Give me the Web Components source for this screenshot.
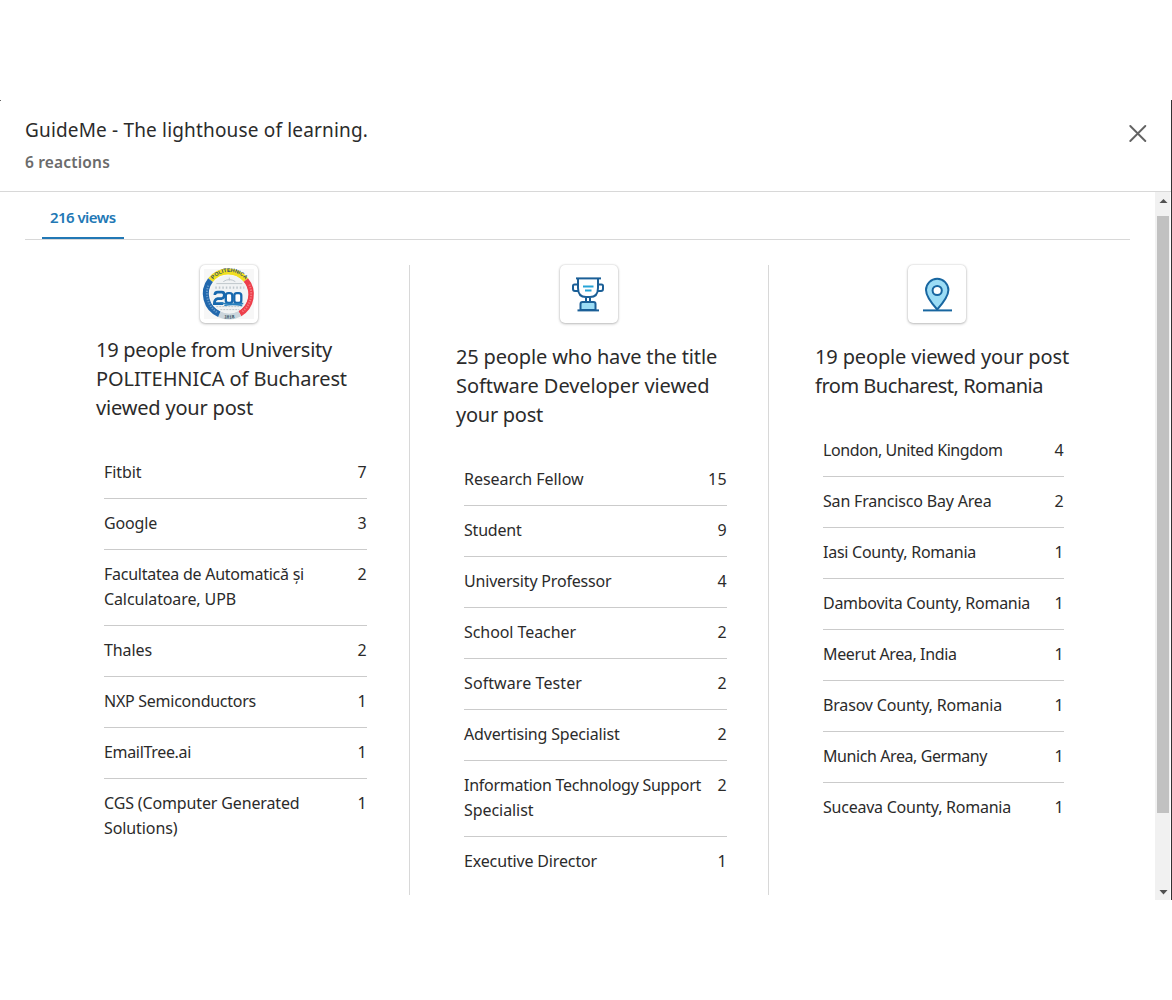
<!DOCTYPE html>
<html lang="en"><head><meta charset="utf-8"><title>Post analytics</title>
<style>body{margin:0;background:#fff;font-family:"Noto Sans","Open Sans",sans-serif;color:#2b2b2b}</style></head>
<body><analytics-dialog></analytics-dialog>
<script>
/* A single line of text, tracked so that it spans w pixels. */
class FitLine extends HTMLElement{
  connectedCallback(){
    this.attachShadow({mode:'open'}).innerHTML='<style>:host{display:block;white-space:nowrap}span{display:inline-block}</style><span></span>';
    const s=this.shadowRoot.querySelector('span');
    s.textContent=this.getAttribute('text');
    const w=+this.getAttribute('w');
    if(w){const d=(w-s.getBoundingClientRect().width)/s.textContent.length;s.style.letterSpacing=d.toFixed(3)+'px';}
  }
}
customElements.define('fit-line',FitLine);
const lines=a=>a.map(([t,w])=>`<fit-line text="${t}" w="${w}"></fit-line>`).join('');

class IconCard extends HTMLElement{
  connectedCallback(){
    const icons={
      school:`<svg width="58" height="58" viewBox="0 0 58 58"><rect x="4" y="4" width="50" height="50" fill="#f7f7f7"/>
      <g transform="translate(.3 .6)"><g fill="none" stroke-width="6"><path d="M10.2 14.5A22.3 22.3 0 0 1 45.4 14.5" stroke="#f1df20"/><path d="M45.4 14.5A22.3 22.3 0 0 1 39.5 48" stroke="#ed3f4b"/><path d="M39.5 48A22.3 22.3 0 0 1 19 48.6" stroke="#cbd5dc"/><path d="M19 48.6A22.3 22.3 0 0 1 10.2 14.5" stroke="#2268ad"/></g>
      <circle cx="29" cy="28.7" r="19" fill="#f1f3f4"/>
      <g fill="none" stroke="#bfc7cc" stroke-width="1"><path d="M16 18h26M29 12v3M23 16q6-4 12 0"/><path d="M15 22h29" stroke-width="2.4" stroke-dasharray="1.5 2"/><path d="M16 41h27M20 44h19" stroke-dasharray="2 1"/></g>
      <path d="M14.500 29.500q0-3 3-3h4q2.500 0 2.500 3t-2.500 3.500h-4q-3.500 1-3.500 5h9" fill="none" stroke="#1768ae" stroke-width="2.600"/>
      <rect x="25.500" y="27.500" width="6.500" height="9.800" rx="2.500" fill="#fff" stroke="#1768ae" stroke-width="2.300"/><rect x="34" y="27.500" width="7" height="9.800" rx="2.500" fill="#fff" stroke="#1768ae" stroke-width="2.300"/>
      <path d="M20 37q6 2 23 1M24 40q8-2 18 0" stroke="#2980bd" stroke-width="1.500" fill="none"/>
      <path id="top" d="M9.500 19.500A21 21 0 0 1 48.500 19.500" fill="none"/><path id="low" d="M18 50.500A24.500 24.500 0 0 0 40 50.500" fill="none"/>
      <g font-family="Liberation Sans" font-weight="700" fill="#315366" text-anchor="middle"><text font-size="5.400"><textPath href="#top" startOffset="50%">POLITEHNICA</textPath></text><text font-size="4.800"><textPath href="#low" startOffset="50%">1818</textPath></text></g>
      <g fill="none" stroke-width="2" stroke-dasharray="1.300 1.300" opacity=".55"><path d="M8 20A23 23 0 0 0 17 47" stroke="#9fc4e4"/><path d="M49 19A22.500 22.500 0 0 1 42 46" stroke="#ffa5a9"/></g></g></svg>`,
      trophy:`<svg width="58" height="58" viewBox="0 0 58 58" fill="none" stroke="#1b5f97" stroke-width="2"><g transform="translate(-1 .4)"><path d="M17 13h25" /><path d="M19 13v9.500q0 9 8 9h4q8 0 8-9V13M19 19h-3.500q-1.500 0-1.500 1.500v3q0 2 2 2h3M39 19h3.500q1.500 0 1.500 1.500v3q0 2-2 2h-3M27 32v4M31 32v4"/><path d="M21.500 44.500v-6q0-2 2-2h11q2 0 2 2v6z" fill="#9bdcf5"/><path d="M18.500 45h21.500"/><path d="M24 21h10.500M26 25h6.500" stroke="#26a4d7" stroke-width="2"/></g></svg>`,
      pin:`<svg width="58" height="58" viewBox="0 0 58 58" stroke="#1866a0" stroke-width="2"><path d="M29.200 44.500Q18 32 18 25a11.200 11.200 0 0 1 22.400 0Q40.400 32 29.200 44.500z" fill="#9bdcf5"/><circle cx="29.200" cy="25.500" r="4.600" fill="#fff"/><path d="M15 45.400h29"/></svg>`};
    this.attachShadow({mode:'open'}).innerHTML=`<style>:host{display:block;width:58px;height:58px;border-radius:5px;background:#fff;box-shadow:0 0 2px rgba(0,0,0,.18),0 1px 3px rgba(0,0,0,.24)}svg{display:block}</style>${icons[this.getAttribute('name')]}`;
  }
}
customElements.define('icon-card',IconCard);

class ViewRow extends HTMLElement{
  connectedCallback(){
    const r=this.data;
    this.attachShadow({mode:'open'}).innerHTML=`<style>:host{display:flex;justify-content:space-between;font-size:16px;line-height:25px;padding:12px 0 13px;border-bottom:1px solid #cbcbcb}:host(:last-child){border-bottom:0}</style><div>${lines(r[0])}</div><fit-line text="${r[1]}" w="${r[1].length>1?19:9.5}"></fit-line>`;
  }
}
customElements.define('view-row',ViewRow);

class ViewColumn extends HTMLElement{
  connectedCallback(){
    const c=this.data;
    this.attachShadow({mode:'open'}).innerHTML=`<style>:host{display:block;box-sizing:border-box;width:${c.width}px;padding-left:${c.pad}px;border-right:${c.last?0:1}px solid #d8d8d8}
    icon-card{margin-left:${c.icon}px}h2{margin:${c.gap}px 0 26px;font-size:20px;line-height:29px;font-weight:400}.rows{margin-left:8px;width:${c.rowWidth}px}</style><icon-card name="${c.name}"></icon-card><h2>${lines(c.title)}</h2><div class="rows"></div>`;
    const box=this.shadowRoot.querySelector('.rows');
    c.rows.forEach(r=>{const e=document.createElement('view-row');e.data=r;box.append(e)});
  }
}
customElements.define('view-column',ViewColumn);

class ScrollTrack extends HTMLElement{
  connectedCallback(){this.attachShadow({mode:'open'}).innerHTML=`<style>:host{display:flex;flex-direction:column;align-items:center;width:15px;background:#f1f1f1}svg{display:block;flex:none}i{display:block;width:12px;height:597px;background:#c1c1c1}</style><svg width="15" height="24"><path d="M4.500 11L8.500 7l4 4z" fill="#505050"/></svg><i></i><svg width="15" height="87"><path d="M4.500 77h8l-4 4.500z" fill="#505050"/></svg>`}
}
customElements.define('scroll-track',ScrollTrack);

class AnalyticsDialog extends HTMLElement{
  connectedCallback(){
    this.attachShadow({mode:'open'}).innerHTML=`<style>
    :host{display:block;box-sizing:border-box;width:1172px;height:1000px;padding-top:100px;overflow:hidden}
    .dialog{box-sizing:border-box;height:800px;border-right:1.500px solid #333;background:linear-gradient(#666,#666) 0 0/1px 1px no-repeat}
    header{box-sizing:border-box;height:92px;border-bottom:1px solid #d8d8d8;padding:15px 24px 0 25px;display:flex;justify-content:space-between}
    h1{margin:0;font-size:19px;line-height:30px;font-weight:400}
    .sub{font-size:15.500px;line-height:24px;font-weight:600;color:#6b6b6b;margin-top:5px}
    header svg{margin-top:9px}
    .body{display:flex;height:708px}
    main{width:1155px;padding-left:25px;box-sizing:border-box}
    nav{display:flex;box-sizing:border-box;width:1105px;height:48px;border-bottom:1px solid #d8d8d8;padding-left:17px}
    .tab{box-sizing:border-box;width:82px;height:47px;padding:13px 0 0 8px;border-bottom:2px solid #2278b5;color:#2278b5;font-size:15px;font-weight:600;line-height:24px}
    .cols{display:flex;height:630px;margin-top:25px;overflow:visible}
    </style>
    <div class="dialog"><header><div><h1>${lines([['GuideMe - The lighthouse of learning.',343]])}</h1><div class="sub">${lines([['6 reactions',85]])}</div></div>
    <svg width="18" height="18" viewBox="0 0 18 18"><path d="M1.300 2l15 15M16.300 2l-15 15" stroke="#636363" stroke-width="1.900" stroke-linecap="round"/></svg></header>
    <div class="body"><main><nav><div class="tab">${lines([['216 views',65.5]])}</div></nav><div class="cols"></div></main><scroll-track></scroll-track></div></div>`;
    const data=[
    {name:'school',width:385,pad:71,icon:104,gap:12,rowWidth:263,title:[['19 people from University',236],['POLITEHNICA of Bucharest',251],['viewed your post',157]],
     rows:[[[['Fitbit',37.5]],'7'],[[['Google',53]],'3'],[[['Facultatea de Automatică și',200],['Calculatoare, UPB',132]],'2'],[[['Thales',48]],'2'],[[['NXP Semiconductors',152]],'1'],[[['EmailTree.ai',87]],'1'],[[['CGS (Computer Generated',195.5],['Solutions)',73.5]],'1']]},
    {name:'trophy',width:359,pad:46,icon:104,gap:19,rowWidth:263,title:[['25 people who have the title',261],['Software Developer viewed',253.5],['your post',87]],
     rows:[[[['Research Fellow',119.5]],'15'],[[['Student',57.5]],'9'],[[['University Professor',147.5]],'4'],[[['School Teacher',112]],'2'],[[['Software Tester',118]],'2'],[[['Advertising Specialist',155.5]],'2'],[[['Information Technology Support',237],['Specialist',69.5]],'2'],[[['Executive Director',133]],'1']]},
    {name:'pin',width:361,pad:46,icon:93,gap:19,rowWidth:241,last:1,title:[['19 people viewed your post',254],['from Bucharest, Romania',228]],
     rows:[[[['London, United Kingdom',179.5]],'4'],[[['San Francisco Bay Area',168.5]],'2'],[[['Iasi County, Romania',153]],'1'],[[['Dambovita County, Romania',207]],'1'],[[['Meerut Area, India',133.5]],'1'],[[['Brasov County, Romania',179]],'1'],[[['Munich Area, Germany',164]],'1'],[[['Suceava County, Romania',188]],'1']]}];
    const cols=this.shadowRoot.querySelector('.cols');
    data.forEach(d=>{const e=document.createElement('view-column');e.data=d;cols.append(e)});
  }
}
customElements.define('analytics-dialog',AnalyticsDialog);
</script></body></html>
